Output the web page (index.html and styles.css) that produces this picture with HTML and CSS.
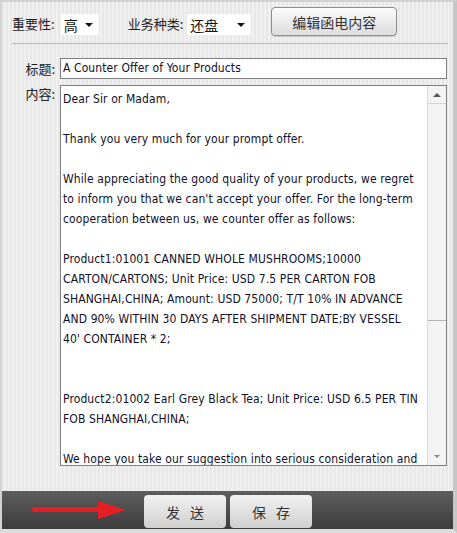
FILE: index.html
```html
<!DOCTYPE html>
<html>
<head>
<meta charset="utf-8">
<link rel="stylesheet" href="styles.css">
</head>
<body>
<div class="frame">
  <div class="toprow">
    <span class="lbl">重要性:</span>
    <div class="sel sel-imp"><span>高</span><i class="tri"></i></div>
    <span class="lbl lbl-type">业务种类:</span>
    <div class="sel sel-type"><span>还盘</span><i class="tri"></i></div>
    <button class="btn-edit">编辑函电内容</button>
  </div>
  <div class="hr"></div>
  <div class="row row-title">
    <label class="flabel">标题:</label>
    <div class="input">A Counter Offer of Your Products</div>
  </div>
  <div class="row row-body">
    <label class="flabel">内容:</label>
    <div class="textarea">
      <div class="text">
        <div class="ln">Dear Sir or Madam,</div>
        <div class="ln"></div>
        <div class="ln">Thank you very much for your prompt offer.</div>
        <div class="ln"></div>
        <div class="ln">While appreciating the good quality of your products, we regret</div>
        <div class="ln">to inform you that we can't accept your offer. For the long-term</div>
        <div class="ln">cooperation between us, we counter offer as follows:</div>
        <div class="ln"></div>
        <div class="ln">Product1:01001 CANNED WHOLE MUSHROOMS;10000</div>
        <div class="ln">CARTON/CARTONS; Unit Price: USD 7.5 PER CARTON FOB</div>
        <div class="ln">SHANGHAI,CHINA; Amount: USD 75000; T/T 10% IN ADVANCE</div>
        <div class="ln">AND 90% WITHIN 30 DAYS AFTER SHIPMENT DATE;BY VESSEL</div>
        <div class="ln">40' CONTAINER * 2;</div>
        <div class="ln"></div>
        <div class="ln"></div>
        <div class="ln">Product2:01002 Earl Grey Black Tea; Unit Price: USD 6.5 PER TIN</div>
        <div class="ln">FOB SHANGHAI,CHINA;</div>
        <div class="ln"></div>
        <div class="ln">We hope you take our suggestion into serious consideration and</div>
      </div>
      <div class="sbar">
        <div class="sb-btn sb-up"><i class="tri-up"></i></div>
        <div class="sb-thumb"></div>
        <div class="sb-track"></div>
        <div class="sb-btn sb-down"><i class="tri-down"></i></div>
      </div>
    </div>
  </div>
  <div class="bottombar">
    <svg class="arrow" width="96" height="20" viewBox="0 0 96 20">
      <rect x="0" y="7" width="70" height="5" rx="2.5" fill="#e61e25"/>
      <polygon points="66,1 94,10 66,19" fill="#e61e25"/>
    </svg>
    <button class="btn-bot btn-send">发送</button>
    <button class="btn-bot">保存</button>
  </div>
</div>
</body>
</html>
```
FILE: styles.css
```css
html, body {
  margin: 0;
  padding: 0;
  background: #fff;
}
.frame {
  width: 457px;
  height: 533px;
  box-sizing: border-box;
  border-top: 2px solid #d2d2d2;
  border-left: 2px solid #d2d2d2;
  border-right: 4px solid #c6c6c6;
  border-bottom: 4px solid #dcdcdc;
  background: repeating-linear-gradient(90deg, #e8e8e8 0 2px, #f0f0f0 2px 4px);
  font-family: "Noto Sans CJK SC", sans-serif;
  display: flex;
  flex-direction: column;
}
.toprow {
  height: 41px;
  display: flex;
  align-items: center;
  padding-left: 10px;
  padding-top: 1px;
  box-sizing: border-box;
}
.lbl {
  font-size: 13px;
  color: #222;
  line-height: 16px;
  margin-top: 1px;
}
.sel {
  height: 21px;
  background: #fff;
  display: flex;
  align-items: center;
  justify-content: space-between;
  box-sizing: border-box;
  padding: 0 6px 0 3px;
  font-size: 14px;
  color: #111;
  margin-top: 3px;
}
.sel-imp {
  width: 38px;
  margin-left: 6px;
}
.lbl-type {
  margin-left: 29px;
}
.sel-type {
  width: 64px;
  margin-left: 4px;
}
.tri {
  width: 0;
  height: 0;
  border-left: 4px solid transparent;
  border-right: 4px solid transparent;
  border-top: 4px solid #111;
}
.btn-edit {
  margin-left: 20px;
  width: 126px;
  height: 29px;
  margin-top: -3px;
  border: 1px solid #8d8d8d;
  border-radius: 4px;
  background: linear-gradient(#fbfbfb, #dcdcdc);
  box-shadow: 0 1px 1px rgba(0,0,0,0.15);
  font-family: "Noto Sans CJK SC", sans-serif;
  font-size: 14px;
  color: #333;
  padding: 0;
}
.hr {
  height: 1px;
  background: #b9b9b9;
  margin-left: 10px;
  width: 436px;
}
.row {
  display: flex;
}
.row-title {
  margin-top: 14px;
}
.row-body {
  margin-top: 6px;
}
.flabel {
  width: 58px;
  box-sizing: border-box;
  padding-right: 5px;
  text-align: right;
  font-size: 13px;
  color: #222;
  line-height: 18px;
}
.row-title .flabel {
  padding-top: 2px;
}
.row-body .flabel {
  padding-top: 0;
}
.input {
  width: 387px;
  height: 21px;
  box-sizing: border-box;
  border: 1px solid #7f7f7f;
  background: #fff;
  font-family: "DejaVu Sans Condensed", "Liberation Sans", sans-serif;
  font-size: 12px;
  letter-spacing: 0.1px;
  line-height: 19px;
  padding-left: 2px;
  color: #10102a;
}
.textarea {
  width: 387px;
  height: 381px;
  box-sizing: border-box;
  border: 1px solid #7f7f7f;
  background: #fff;
  display: flex;
  overflow: hidden;
}
.text {
  flex: 1;
  padding: 3px 0 0 2px;
  font-family: "DejaVu Sans Condensed", "Liberation Sans", sans-serif;
  font-size: 12px;
  letter-spacing: 0.11px;
  color: #10102a;
  overflow: hidden;
}
.ln {
  height: 20px;
  line-height: 20px;
  white-space: pre;
}
.sbar {
  width: 18px;
  border-left: 1px solid #dcdcdc;
  background: #f3f3f3;
  display: flex;
  flex-direction: column;
}
.sb-btn {
  height: 17px;
  display: flex;
  align-items: center;
  justify-content: center;
}
.sb-up {
  border-bottom: 1px solid #d4d4d4;
}
.sb-thumb {
  height: 216px;
  border-bottom: 1px solid #b5b5b5;
}
.sb-track {
  flex: 1;
}
.tri-up {
  width: 0;
  height: 0;
  border-left: 4px solid transparent;
  border-right: 4px solid transparent;
  border-bottom: 4px solid #555;
}
.tri-down {
  width: 0;
  height: 0;
  border-left: 3px solid transparent;
  border-right: 3px solid transparent;
  border-top: 3px solid #888;
}
.bottombar {
  margin-top: 25px;
  height: 38px;
  background: linear-gradient(#5e5e5e, #3c3c3c);
  display: flex;
  align-items: center;
  padding-left: 30px;
}
.btn-bot {
  width: 82px;
  height: 33px;
  margin-top: 3px;
  border: 0;
  border-radius: 4px;
  background: linear-gradient(#f2f2f2, #cfcfcf);
  font-family: "Noto Sans CJK SC", sans-serif;
  font-size: 14px;
  letter-spacing: 10px;
  text-indent: 10px;
  color: #333;
  padding: 0;
}
.btn-send {
  margin-left: 16px;
}
.btn-bot + .btn-bot {
  margin-left: 4px;
}
```
